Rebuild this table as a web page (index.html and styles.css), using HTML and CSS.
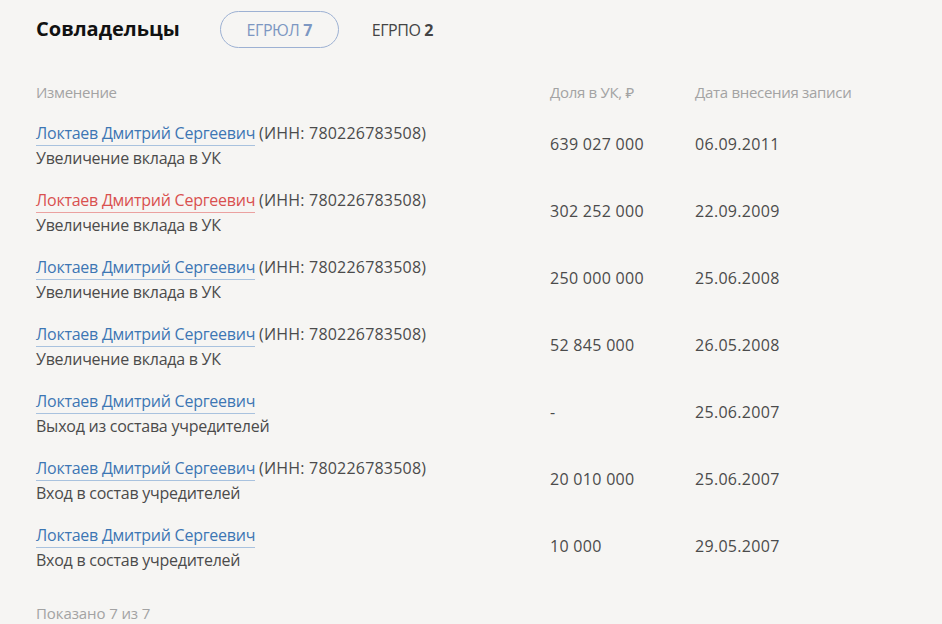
FILE: index.html
```html
<!DOCTYPE html>
<html lang="ru">
<head>
<meta charset="utf-8">
<title>Совладельцы</title>
<link rel="stylesheet" href="styles.css">
</head>
<body>
<section class="owners">
  <header class="owners-head">
    <h2 class="owners-title">Совладельцы</h2>
    <div class="tabs">
      <span class="tab tab-active">ЕГРЮЛ <b>7</b></span>
      <span class="tab">ЕГРПО <b>2</b></span>
    </div>
  </header>

  <div class="table">
    <div class="row row-head">
      <div class="cell">Изменение</div>
      <div class="cell">Доля в УК, ₽</div>
      <div class="cell">Дата внесения записи</div>
    </div>

    <div class="row">
      <div class="cell change">
        <div><a class="person">Локтаев Дмитрий Сергеевич</a> <span class="inn">(ИНН: 780226783508)</span></div>
        <div>Увеличение вклада в УК</div>
      </div>
      <div class="cell num">639 027 000</div>
      <div class="cell num">06.09.2011</div>
    </div>

    <div class="row">
      <div class="cell change">
        <div><a class="person person-red">Локтаев Дмитрий Сергеевич</a> <span class="inn">(ИНН: 780226783508)</span></div>
        <div>Увеличение вклада в УК</div>
      </div>
      <div class="cell num">302 252 000</div>
      <div class="cell num">22.09.2009</div>
    </div>

    <div class="row">
      <div class="cell change">
        <div><a class="person">Локтаев Дмитрий Сергеевич</a> <span class="inn">(ИНН: 780226783508)</span></div>
        <div>Увеличение вклада в УК</div>
      </div>
      <div class="cell num">250 000 000</div>
      <div class="cell num">25.06.2008</div>
    </div>

    <div class="row">
      <div class="cell change">
        <div><a class="person">Локтаев Дмитрий Сергеевич</a> <span class="inn">(ИНН: 780226783508)</span></div>
        <div>Увеличение вклада в УК</div>
      </div>
      <div class="cell num">52 845 000</div>
      <div class="cell num">26.05.2008</div>
    </div>

    <div class="row">
      <div class="cell change">
        <div><a class="person">Локтаев Дмитрий Сергеевич</a></div>
        <div>Выход из состава учредителей</div>
      </div>
      <div class="cell num">-</div>
      <div class="cell num">25.06.2007</div>
    </div>

    <div class="row">
      <div class="cell change">
        <div><a class="person">Локтаев Дмитрий Сергеевич</a> <span class="inn">(ИНН: 780226783508)</span></div>
        <div>Вход в состав учредителей</div>
      </div>
      <div class="cell num">20 010 000</div>
      <div class="cell num">25.06.2007</div>
    </div>

    <div class="row">
      <div class="cell change">
        <div><a class="person">Локтаев Дмитрий Сергеевич</a></div>
        <div>Вход в состав учредителей</div>
      </div>
      <div class="cell num">10 000</div>
      <div class="cell num">29.05.2007</div>
    </div>
  </div>

  <footer class="owners-foot">Показано 7 из 7</footer>
</section>
</body>
</html>
```
FILE: styles.css
```css
html, body {
  margin: 0;
  padding: 0;
  background: #f6f5f3;
}
body {
  font-family: "Open Sans", "Noto Sans", sans-serif;
  color: #4b4b4b;
  font-size: 16px;
}
.owners {
  padding: 11px 36px 0;
}
.owners-head {
  display: flex;
  align-items: center;
  height: 37px;
}
.owners-title {
  margin: 0;
  font-size: 20px;
  font-weight: 700;
  color: #111;
  position: relative;
  top: -1px;
}
.tabs {
  display: flex;
  align-items: center;
  margin-left: 40px;
  gap: 33px;
}
.tab {
  font-size: 16px;
  color: #444;
  letter-spacing: -0.45px;
}
.tab b {
  font-weight: 700;
}
.tab-active {
  box-sizing: border-box;
  width: 119px;
  height: 37px;
  border: 1px solid #9db1d3;
  border-radius: 19px;
  display: flex;
  align-items: center;
  justify-content: center;
  gap: 4px;
  color: #7d97c2;
}
.table {
  margin-top: 34px;
  display: flex;
  flex-direction: column;
  gap: 17px;
}
.row {
  display: grid;
  grid-template-columns: 514px 145px 1fr;
  align-items: center;
  line-height: 25px;
  letter-spacing: -0.25px;
}
.num {
  letter-spacing: 0.3px;
  padding-bottom: 4px;
}
.inn {
  letter-spacing: 0.2px;
}
.row-head {
  font-size: 15px;
  color: #a3a3a3;
  line-height: 20px;
  letter-spacing: -0.3px;
  margin-bottom: 2px;
}
.row-head .cell {
  letter-spacing: -0.3px;
}
.person {
  color: #3d76b3;
  text-decoration: none;
  border-bottom: 1px solid #a9c2de;
  padding-bottom: 1px;
}
.person-red {
  color: #d9504f;
  border-bottom-color: #eba1a0;
}
.owners-foot {
  margin-top: 30px;
  font-size: 15px;
  color: #a3a3a3;
  line-height: 20px;
  letter-spacing: -0.1px;
}
```
